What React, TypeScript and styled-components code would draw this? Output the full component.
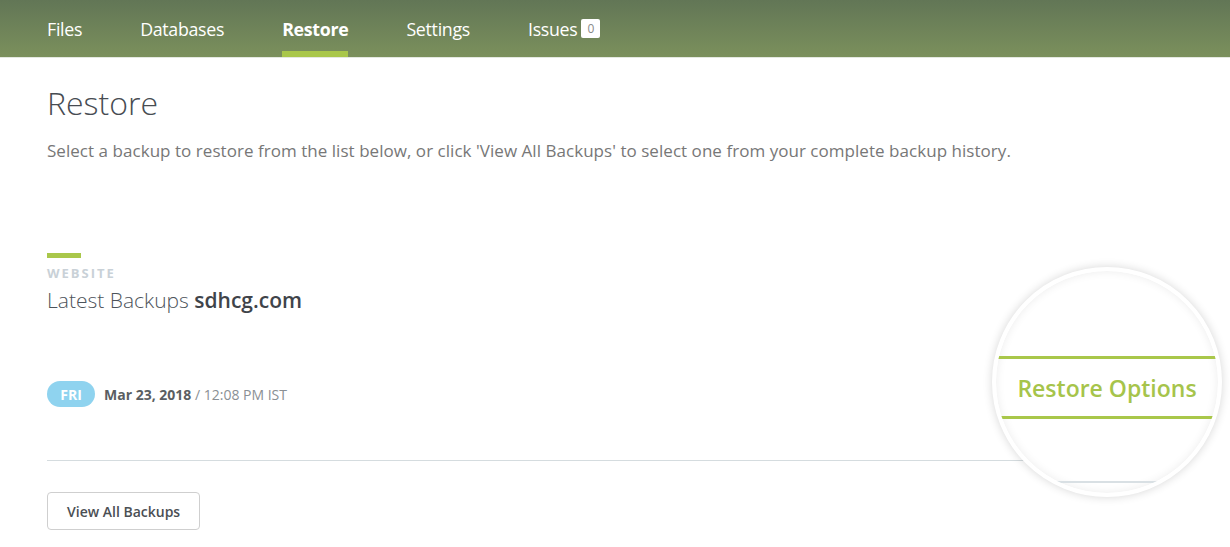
import styled, { createGlobalStyle } from "styled-components";

const GlobalStyle = createGlobalStyle`
  body {
    margin: 0;
    background: #fff;
    font-family: "Open Sans", "Liberation Sans", sans-serif;
  }
`;

const navItems = [
  { label: "Files" },
  { label: "Databases" },
  { label: "Restore", active: true },
  { label: "Settings" },
  { label: "Issues", badge: "0" },
];

export default function App() {
  return (
    <>
      <GlobalStyle />
      <Page>
        <NavBar>
          {navItems.map((item) => (
            <NavItem key={item.label} $active={item.active}>
              {item.label}
              {item.badge !== undefined && <NavBadge>{item.badge}</NavBadge>}
            </NavItem>
          ))}
        </NavBar>

        <Content>
          <Title>Restore</Title>
          <Intro>
            Select a backup to restore from the list below, or click 'View All Backups' to select
            one from your complete backup history.
          </Intro>

          <Section>
            <Accent />
            <Eyebrow>Website</Eyebrow>
            <SectionTitle>
              Latest Backups <strong>sdhcg.com</strong>
            </SectionTitle>

            <BackupRow>
              <DayPill>FRI</DayPill>
              <BackupDate>
                <strong>Mar 23, 2018</strong> / 12:08 PM IST
              </BackupDate>
            </BackupRow>

            <Divider />

            <OutlineButton>View All Backups</OutlineButton>
          </Section>
        </Content>

        <Magnifier>
          <MagnifiedOption>Restore Options</MagnifiedOption>
          <MagnifiedRule />
        </Magnifier>
      </Page>
    </>
  );
}

const Page = styled.div`
  position: relative;
  width: 1230px;
  height: 547px;
  overflow: hidden;
`;

const NavBar = styled.nav`
  display: flex;
  gap: 58px;
  height: 57px;
  padding: 0 47px;
  background: linear-gradient(to bottom, #627656 0%, #7b905c 100%);
  border-bottom: 1px solid #e4e8e0;
`;

const NavItem = styled.div<{ $active?: boolean }>`
  position: relative;
  display: flex;
  align-items: center;
  height: 57px;
  font-size: 17.8px;
  font-weight: ${(p) => (p.$active ? 700 : 400)};
  color: #fff;
  letter-spacing: -0.3px;

  &::after {
    content: "";
    position: absolute;
    left: 0;
    right: 0;
    bottom: 0;
    height: 6px;
    background: ${(p) => (p.$active ? "#a9c74a" : "transparent")};
  }
`;

const NavBadge = styled.span`
  display: inline-flex;
  align-items: center;
  justify-content: center;
  width: 19px;
  height: 19px;
  margin-left: 4px;
  border-radius: 2px;
  background: #fff;
  color: #888;
  font-size: 12px;
  font-weight: 400;
  letter-spacing: 0;
`;

const Content = styled.main`
  padding: 26px 47px 0;
`;

const Title = styled.h1`
  margin: 0;
  font-size: 32px;
  font-weight: 300;
  line-height: 38px;
  color: #474c52;
`;

const Intro = styled.p`
  margin: 18px 0 0;
  font-size: 17px;
  font-weight: 400;
  line-height: 22px;
  letter-spacing: 0.04px;
  color: #777;
`;

const Section = styled.section`
  margin-top: 91px;
`;

const Accent = styled.div`
  width: 34px;
  height: 5px;
  background: #a9c74a;
`;

const Eyebrow = styled.div`
  margin-top: 6px;
  font-size: 13px;
  line-height: 18px;
  font-weight: 700;
  letter-spacing: 2px;
  text-transform: uppercase;
  color: #c9d1d7;
`;

const SectionTitle = styled.h2`
  margin: 4px 0 0;
  font-size: 21px;
  font-weight: 300;
  line-height: 28px;
  color: #4d535a;

  strong {
    font-weight: 600;
    color: #3f444a;
  }
`;

const BackupRow = styled.div`
  display: flex;
  align-items: center;
  gap: 9px;
  margin-top: 67px;
`;

const DayPill = styled.span`
  display: inline-flex;
  align-items: center;
  justify-content: center;
  width: 48px;
  height: 26px;
  border-radius: 13px;
  background: #8fd3ef;
  color: #fff;
  font-size: 14px;
  font-weight: 700;
`;

const BackupDate = styled.span`
  font-size: 14px;
  color: #8a8f94;

  strong {
    font-weight: 700;
    color: #5a5e62;
  }
`;

const Divider = styled.hr`
  margin: 53px 0 0;
  border: 0;
  border-top: 1px solid #d5dcdf;
`;

const OutlineButton = styled.button`
  margin-top: 31px;
  height: 38px;
  padding: 0 19px;
  border: 1px solid #cfcfcf;
  border-radius: 4px;
  background: #fff;
  font-family: inherit;
  font-size: 14px;
  font-weight: 600;
  color: #4b4f54;
`;

const Magnifier = styled.div`
  position: absolute;
  left: 992px;
  top: 267px;
  width: 222px;
  height: 222px;
  border: 4px solid #fff;
  border-radius: 50%;
  overflow: hidden;
  background: #fff;
  box-shadow: 0 0 10px rgba(0, 0, 0, 0.16), inset 0 0 10px rgba(0, 0, 0, 0.08);
  display: flex;
  flex-direction: column;
  align-items: center;
`;

const MagnifiedOption = styled.div`
  margin-top: 85px;
  width: 100%;
  height: 57px;
  display: flex;
  align-items: center;
  justify-content: center;
  border-top: 3px solid #a9c74a;
  border-bottom: 3px solid #a9c74a;
  font-size: 23px;
  font-weight: 600;
  color: #a6c44b;
`;

const MagnifiedRule = styled.div`
  margin-top: 62px;
  width: 100%;
  height: 2px;
  background: #d9e0e4;
`;
